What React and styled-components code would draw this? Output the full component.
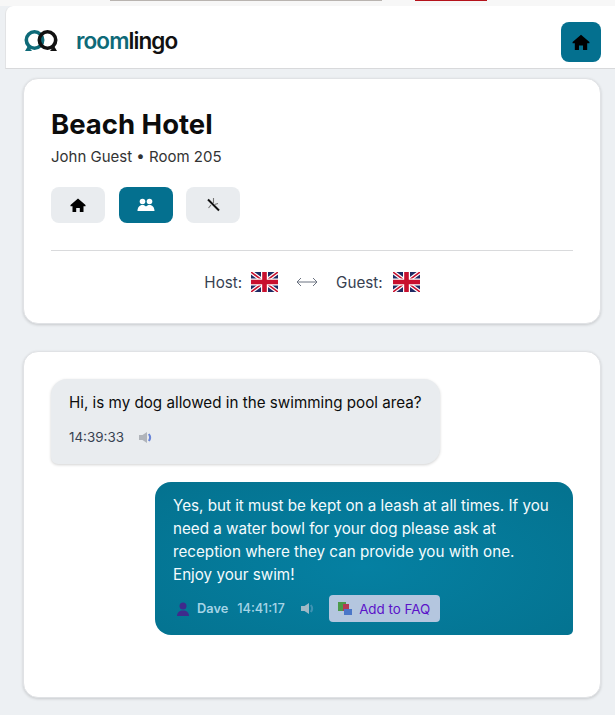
import styled, { createGlobalStyle } from 'styled-components';

const GlobalStyle = createGlobalStyle`
  html, body {
    margin: 0;
    padding: 0;
    background: #edf0f3;
    font-family: Inter, "Liberation Sans", sans-serif;
  }
`;

const Page = styled.div`
  width: 615px;
  height: 715px;
  overflow: hidden;
  background: #edf0f3;
`;

const TopStrip = styled.div`
  height: 6px;
  display: flex;
  background: #f7f7f7;
`;

const StripTab = styled.div`
  height: 1px;
  width: ${(props) => props.$width}px;
  margin-left: ${(props) => props.$left}px;
  background: ${(props) => props.$color};
`;

const Header = styled.header`
  height: 63px;
  margin-left: 5px;
  padding: 9px 14px 0 18px;
  box-sizing: border-box;
  display: flex;
  align-items: center;
  justify-content: space-between;
  background: #fff;
  border-bottom: 1px solid #d8d9db;
  border-left: 1px solid #e2e3e5;
  border-top-left-radius: 8px;
`;

const Logo = styled.div`
  display: flex;
  align-items: center;
  gap: 18px;
  margin-top: -2px;
`;

const Wordmark = styled.div`
  font-size: 22.5px;
  font-weight: 600;
  letter-spacing: -0.9px;
  color: #111;
  span {
    color: #0e6a78;
  }
`;

const HomeButton = styled.button`
  width: 40px;
  height: 40px;
  border: 0;
  padding: 0;
  border-radius: 8px;
  background: #04708f;
  display: flex;
  align-items: center;
  justify-content: center;
`;

const Content = styled.main`
  padding: 9px 14px 0 23px;
  display: flex;
  flex-direction: column;
  gap: 27px;
`;

const Card = styled.section`
  background: #fff;
  border-radius: 15px;
  border: 1px solid #e0e2e5;
  box-shadow: 0 1px 3px rgba(0, 0, 0, 0.16);
  box-sizing: border-box;
  height: ${(props) => props.$height}px;
  padding: ${(props) => props.$padding};
`;

const Title = styled.h1`
  margin: 0;
  font-size: 27.5px;
  line-height: 34px;
  font-weight: 700;
  color: #0c0c0c;
`;

const Subtitle = styled.p`
  margin: 6px 0 0;
  font-size: 15px;
  line-height: 20px;
  color: #333;
`;

const Tabs = styled.div`
  display: flex;
  gap: 13.5px;
  margin-top: 20px;
`;

const Tab = styled.button`
  width: 54px;
  height: 36px;
  border: 0;
  padding: 0;
  border-radius: 8px;
  background: ${(props) => (props.$active ? '#04708f' : '#e9ecef')};
  display: flex;
  align-items: center;
  justify-content: center;
`;

const LangRow = styled.div`
  margin-top: 27px;
  padding-top: 21px;
  border-top: 1px solid #d9dadc;
  display: flex;
  justify-content: center;
  align-items: center;
  font-size: 15.2px;
  color: #374151;
`;

const LangLabel = styled.span`
  margin-right: ${(props) => props.$gap}px;
`;

const Swap = styled.svg`
  margin: 0 18px;
`;

const Messages = styled.div`
  display: flex;
  flex-direction: column;
  gap: 18px;
`;

const Bubble = styled.div`
  box-sizing: border-box;
  align-self: ${(props) => (props.$own ? 'flex-end' : 'flex-start')};
  width: ${(props) => (props.$own ? 418 : 389)}px;
  padding: ${(props) => (props.$own ? '12px 18px 13px' : '12px 18px 18px')};
  border-radius: ${(props) => (props.$own ? '16px 16px 5px 16px' : '16px 16px 16px 7px')};
  background: ${(props) => (props.$own ? 'radial-gradient(ellipse at 50% 55%, #0580a2 0%, #04728f 100%)' : '#e9ecef')};
  box-shadow: ${(props) => (props.$own ? 'none' : '0 1px 3px rgba(0,0,0,0.18)')};
  color: ${(props) => (props.$own ? '#f4fbfd' : '#0c0c0c')};
`;

const BubbleText = styled.div`
  font-size: 15.2px;
  line-height: 23px;
`;

const Meta = styled.div`
  margin-top: ${(props) => (props.$own ? 9 : 14)}px;
  display: flex;
  align-items: center;
  font-size: ${(props) => (props.$own ? 12.8 : 13.4)}px;
  font-weight: ${(props) => (props.$own ? 500 : 400)};
  height: ${(props) => (props.$own ? 27 : 18)}px;
  color: ${(props) => (props.$own ? '#a5d4e6' : '#374151')};
`;

const Sender = styled.span`
  display: flex;
  align-items: center;
  gap: 7px;
  margin: 0 9px 0 3px;
  font-weight: 600;
`;

const Speaker = styled.svg`
  margin-left: ${(props) => props.$left}px;
`;

const FaqButton = styled.button`
  margin-left: 14px;
  height: 27px;
  width: 111px;
  border: 0;
  padding: 0;
  border-radius: 4px;
  background: #b4c6df;
  color: #5b13c9;
  font: inherit;
  font-weight: 400;
  font-size: 13.4px;
  display: flex;
  align-items: center;
  justify-content: center;
  gap: 7px;
`;

const HomeIcon = ({ size = 16 }) => (
  <svg width={size} height={size} viewBox="0 0 16 16">
    <path
      fill="#000"
      d="M8 1.500 15.500 8v1.200H13.500V15H9.800V11H6.200V15H2.500V9.200H.5V8Z"
    />
  </svg>
);

const PeopleIcon = () => (
  <svg width="18" height="14" viewBox="0 0 18 14" fill="#fff">
    <circle cx="5.500" cy="3.500" r="2.800" />
    <circle cx="12.500" cy="3.500" r="2.800" />
    <path d="M.5 13c0-3.400 2-6 5-6 1.500 0 2.700.6 3.500 1.600C9.800 7.600 11 7 12.500 7c3 0 5 2.600 5 6Z" />
  </svg>
);

const WandIcon = () => (
  <svg width="14" height="14" viewBox="0 0 14 14" fill="none">
    <path d="M2 1.500 13 12.500" stroke="#111" strokeWidth="2" />
    <path d="M7.500 0V5M5 7 2.500 10M8.500 6.500 12 5.500" stroke="#777" strokeWidth="1.100" />
  </svg>
);

const Flag = () => (
  <svg width="27" height="20" viewBox="0 0 27 20">
    <rect width="27" height="20" fill="#1f2a63" />
    <path d="M0 0 27 20M27 0 0 20" stroke="#fff" strokeWidth="4" />
    <path d="M0 0 27 20M27 0 0 20" stroke="#c8102e" strokeWidth="1.500" />
    <path d="M13.500 0V20M0 10H27" stroke="#fff" strokeWidth="7" />
    <path d="M13.500 0V20M0 10H27" stroke="#c8102e" strokeWidth="4.600" />
  </svg>
);

const SpeakerIcon = ({ body, wave, $left }) => (
  <Speaker $left={$left} width="14" height="11" viewBox="0 0 14 11">
    <path fill={body} d="M0 3h3.500L8 0v11L3.500 8H0Z" />
    <path d="M9.800 2c1.500 2 1.500 5 0 7" fill="none" stroke={wave} strokeWidth="2" />
  </Speaker>
);

const App = () => (
  <Page>
    <GlobalStyle />
    <TopStrip>
      <StripTab $left={110} $width={272} $color="#b9b4b0" />
      <StripTab $left={33} $width={72} $color="#b5121b" />
    </TopStrip>
    <Header>
      <Logo>
        <svg width="34" height="22" viewBox="0 0 34 22" fill="none">
          <circle cx="10.500" cy="10" r="8.200" stroke="#0e6a78" strokeWidth="3.600" />
          <path d="M1 21h7l-4-5Z" fill="#0e6a78" />
          <circle cx="23.500" cy="10" r="8.200" stroke="#111" strokeWidth="3.600" />
          <path d="M33 21h-7l4-5Z" fill="#111" />
        </svg>
        <Wordmark>
          <span>room</span>lingo
        </Wordmark>
      </Logo>
      <HomeButton aria-label="Home">
        <HomeIcon size={18} />
      </HomeButton>
    </Header>
    <Content>
      <Card $height={246} $padding="28px 27px 0">
        <Title>Beach Hotel</Title>
        <Subtitle>John Guest • Room 205</Subtitle>
        <Tabs>
          <Tab aria-label="Home">
            <HomeIcon />
          </Tab>
          <Tab $active aria-label="Guests">
            <PeopleIcon />
          </Tab>
          <Tab aria-label="Tools">
            <WandIcon />
          </Tab>
        </Tabs>
        <LangRow>
          <LangLabel $gap={9}>Host:</LangLabel>
          <Flag />
          <Swap width="22" height="10" viewBox="0 0 22 10" fill="none" stroke="#6b7280" strokeWidth="1">
            <path d="M1 5H21M5 1 1 5l4 4M17 1l4 4-4 4" />
          </Swap>
          <LangLabel $gap={10}>Guest:</LangLabel>
          <Flag />
        </LangRow>
      </Card>
      <Card $height={347} $padding="27px 27px 0">
        <Messages>
          <Bubble>
            <BubbleText>Hi, is my dog allowed in the swimming pool area?</BubbleText>
            <Meta>
              14:39:33
              <SpeakerIcon $left={15} body="#b0b4ba" wave="#6a86d8" />
            </Meta>
          </Bubble>
          <Bubble $own>
            <BubbleText>
              Yes, but it must be kept on a leash at all times. If you need a water bowl for your dog please ask at
              reception where they can provide you with one. Enjoy your swim!
            </BubbleText>
            <Meta $own>
              <Sender>
                <svg width="14" height="14" viewBox="0 0 14 14" fill="#3f2a8c">
                  <circle cx="7" cy="4" r="3.500" />
                  <path d="M1 14c0-3.500 2.500-5.500 6-5.500s6 2 6 5.500Z" />
                </svg>
                Dave
              </Sender>
              14:41:17
              <SpeakerIcon $left={16} body="#9fb9c6" wave="#3f93b3" />
              <FaqButton>
                <svg width="14" height="15" viewBox="0 0 14 15">
                  <rect x="0" y="1" width="8" height="9" fill="#4c9a4a" />
                  <rect x="5" y="3" width="6" height="7" fill="#b43a55" />
                  <rect x="6" y="8" width="8" height="6" fill="#4a76c8" />
                </svg>
                Add to FAQ
              </FaqButton>
            </Meta>
          </Bubble>
        </Messages>
      </Card>
    </Content>
  </Page>
);

export default App;
